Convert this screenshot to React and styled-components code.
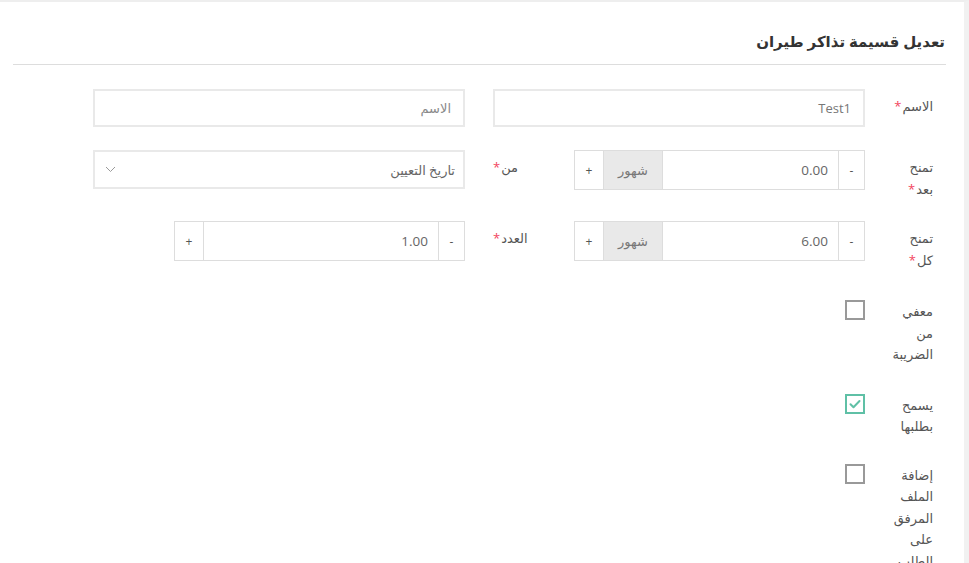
import React from "react";
import styled, { createGlobalStyle } from "styled-components";

const GlobalStyle = createGlobalStyle`
  html, body {
    margin: 0;
    padding: 0;
    background: #fff;
  }
  body {
    font-family: "Open Sans", "DejaVu Sans", sans-serif;
    color: #555;
  }
  * {
    box-sizing: border-box;
  }
`;

const Panel = styled.div`
  direction: rtl;
  height: 563px;
  overflow: hidden;
  border-top: 2px solid #eeeeee;
  border-right: 5px solid #f1f1f1;
  padding: 0 18px 0 13px;
  background: #fff;
`;

const Header = styled.div`
  padding: 27px 1px 11px 0;
  border-bottom: 1px solid #dddddd;
`;

const Title = styled.h3`
  margin: 0;
  font-size: 15px;
  line-height: 24px;
  font-weight: bold;
  color: #333;
`;

const Form = styled.div`
  padding-top: 24px;
`;

const Row = styled.div`
  display: flex;
  align-items: flex-start;
  gap: 28px;
  margin-bottom: ${({ $mb }) => ($mb != null ? $mb : 22)}px;
`;

const Label = styled.label`
  flex: 0 0 40px;
  width: 40px;
  margin-right: 13px;
  padding-top: ${({ $pt }) => ($pt != null ? $pt : 7)}px;
  font-size: 13px;
  line-height: 21.5px;
  color: #555;
  word-spacing: 2px;
`;

const Star = styled.span`
  color: #f2455e;
  margin-right: 1px;
`;

const Cell = styled.div`
  flex: 0 0 372px;
  width: 372px;
  display: flex;
  align-items: flex-start;
`;

const TextInput = styled.div`
  width: 100%;
  height: 38px;
  border: 2px solid #e9e9e9;
  padding: 0 12px;
  display: flex;
  align-items: center;
  font-size: 13px;
  color: ${({ $placeholder }) => ($placeholder ? "#8a8a8a" : "#777")};
`;

const Select = styled.div`
  width: 100%;
  height: 39px;
  border: 2px solid #e9e9e9;
  padding: 0 8px 0 10px;
  display: flex;
  align-items: center;
  justify-content: space-between;
  font-size: 13px;
  color: #666;
`;

const Group = styled.div`
  flex: 0 0 291px;
  width: 291px;
  height: 40px;
  display: flex;
  border: 1px solid #dddddd;
  background: #fff;
`;

const StepButton = styled.div`
  flex: 0 0 ${({ $w }) => $w}px;
  display: flex;
  align-items: center;
  justify-content: center;
  font-size: 12px;
  color: #555;
  border-left: ${({ $last }) => ($last ? "none" : "1px solid #dddddd")};
`;

const NumberField = styled.div`
  flex: 1;
  display: flex;
  align-items: center;
  padding-right: 10px;
  font-size: 13.5px;
  color: #666;
  border-left: 1px solid #dddddd;
`;

const Addon = styled.div`
  flex: 0 0 59px;
  display: flex;
  align-items: center;
  justify-content: center;
  background: #e9e9e9;
  font-size: 13px;
  color: #777;
  border-left: 1px solid #dddddd;
`;

const InlineLabel = styled.label`
  flex: 1;
  display: flex;
  justify-content: flex-end;
  padding-top: 7px;
  font-size: 13px;
  line-height: 21.5px;
  color: #555;
`;

const Check = styled.div`
  width: 20px;
  height: 20px;
  border: 2px solid ${({ $checked }) => ($checked ? "#5fc0a6" : "#999")};
  display: flex;
  align-items: center;
  justify-content: center;
  background: #fff;
`;

const Chevron = () => (
  <svg width="11" height="7" viewBox="0 0 11 7">
    <path d="M1 1l4.5 4.5L10 1" fill="none" stroke="#9a9a9a" strokeWidth="1" />
  </svg>
);

const Tick = () => (
  <svg width="12" height="10" viewBox="0 0 12 10">
    <path
      d="M1.5 5.2l3 3L10.5 2"
      fill="none"
      stroke="#5fc0a6"
      strokeWidth="2"
      strokeLinecap="round"
      strokeLinejoin="round"
    />
  </svg>
);

const Required = ({ children }) => (
  <>
    {children}
    <Star>*</Star>
  </>
);

const Stepper = ({ value, unit }) => (
  <Group>
    <StepButton $w={26}>-</StepButton>
    <NumberField>{value}</NumberField>
    {unit && <Addon>{unit}</Addon>}
    <StepButton $w={28} $last>
      +
    </StepButton>
  </Group>
);

const CheckRow = ({ label, checked, mb }) => (
  <Row $mb={mb}>
    <Label $pt={1}>{label}</Label>
    <Cell>
      <Check $checked={checked}>{checked && <Tick />}</Check>
    </Cell>
  </Row>
);

export default function App() {
  return (
    <>
      <GlobalStyle />
      <Panel>
        <Header>
          <Title>تعديل قسيمة تذاكر طيران</Title>
        </Header>
        <Form>
          <Row $mb={23}>
            <Label>
              <Required>الاسم</Required>
            </Label>
            <Cell>
              <TextInput>Test1</TextInput>
            </Cell>
            <Cell>
              <TextInput $placeholder>الاسم</TextInput>
            </Cell>
          </Row>

          <Row $mb={21}>
            <Label>
              <Required>تمنح بعد</Required>
            </Label>
            <Cell>
              <Stepper value="0.00" unit="شهور" />
              <InlineLabel>
                <span>
                  <Required>من</Required>
                </span>
              </InlineLabel>
            </Cell>
            <Cell>
              <Select>
                <span>تاريخ التعيين</span>
                <Chevron />
              </Select>
            </Cell>
          </Row>

          <Row $mb={29}>
            <Label>
              <Required>تمنح كل</Required>
            </Label>
            <Cell>
              <Stepper value="6.00" unit="شهور" />
              <InlineLabel>
                <span>
                  <Required>العدد</Required>
                </span>
              </InlineLabel>
            </Cell>
            <Cell>
              <Stepper value="1.00" />
            </Cell>
          </Row>

          <CheckRow label="معفي من الضريبة" mb={28} />
          <CheckRow label="يسمح بطلبها" checked mb={26} />
          <CheckRow label="إضافة الملف المرفق على الطلب" mb={0} />
        </Form>
      </Panel>
    </>
  );
}
